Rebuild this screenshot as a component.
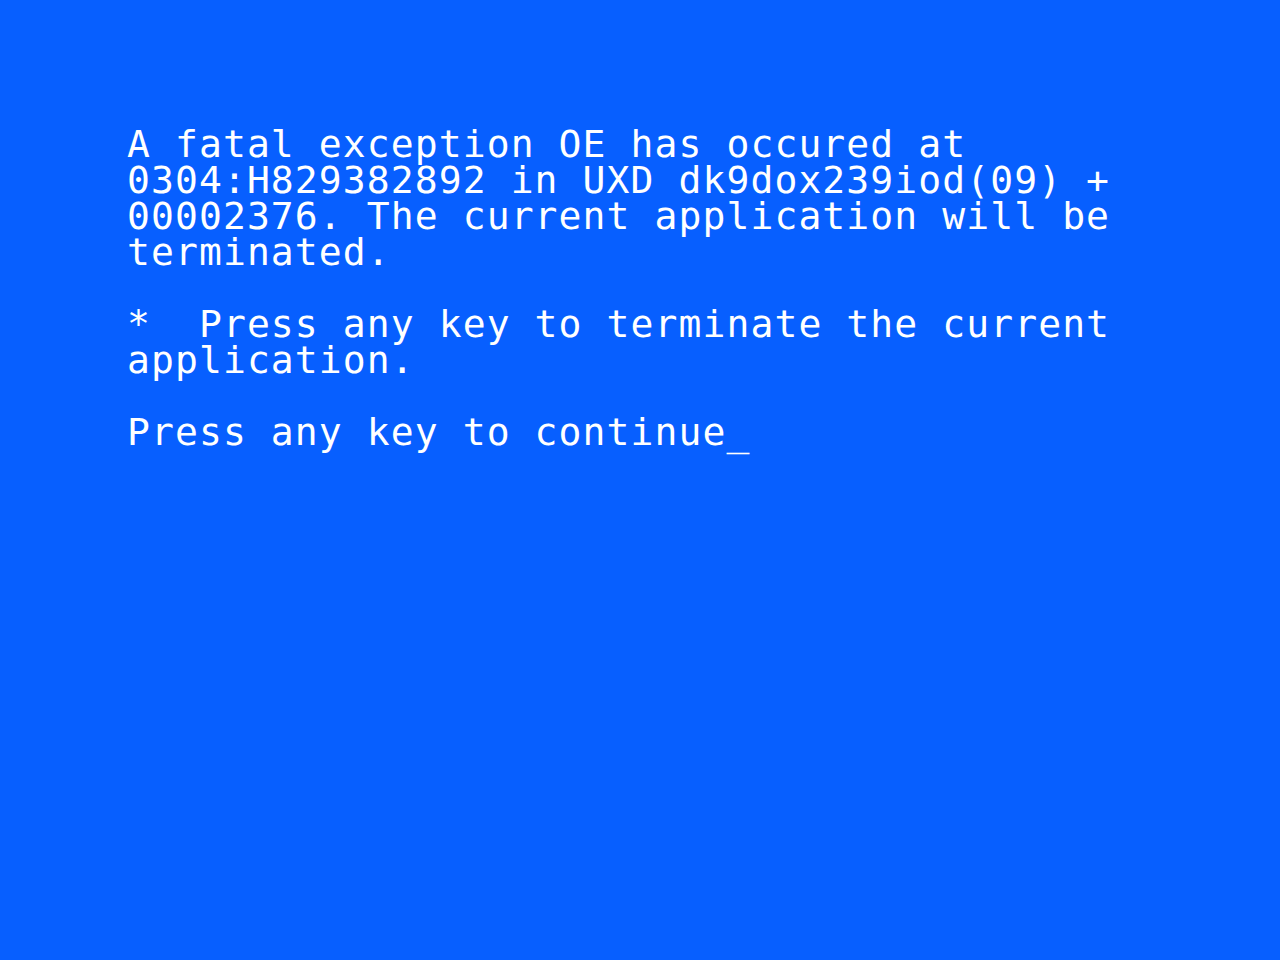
export default function App() {
  const lines = [
    "A fatal exception OE has occured at",
    "0304:H829382892 in UXD dk9dox239iod(09) +",
    "00002376. The current application will be",
    "terminated.",
    "",
    "*  Press any key to terminate the current",
    "application.",
    "",
    "Press any key to continue_",
  ];
  return (
    <div className="w-[1280px] h-[960px] bg-[#075fff] text-white overflow-hidden pl-[127px] pt-[126px]">
      <div
        className="whitespace-pre text-[38px] leading-[36px] tracking-[1.1px]"
        style={{ fontFamily: '"DejaVu Sans Mono", "Liberation Mono", monospace' }}
      >
        {lines.map((l, i) => (
          <div key={i} className="h-[36px]">{l}</div>
        ))}
      </div>
    </div>
  );
}
